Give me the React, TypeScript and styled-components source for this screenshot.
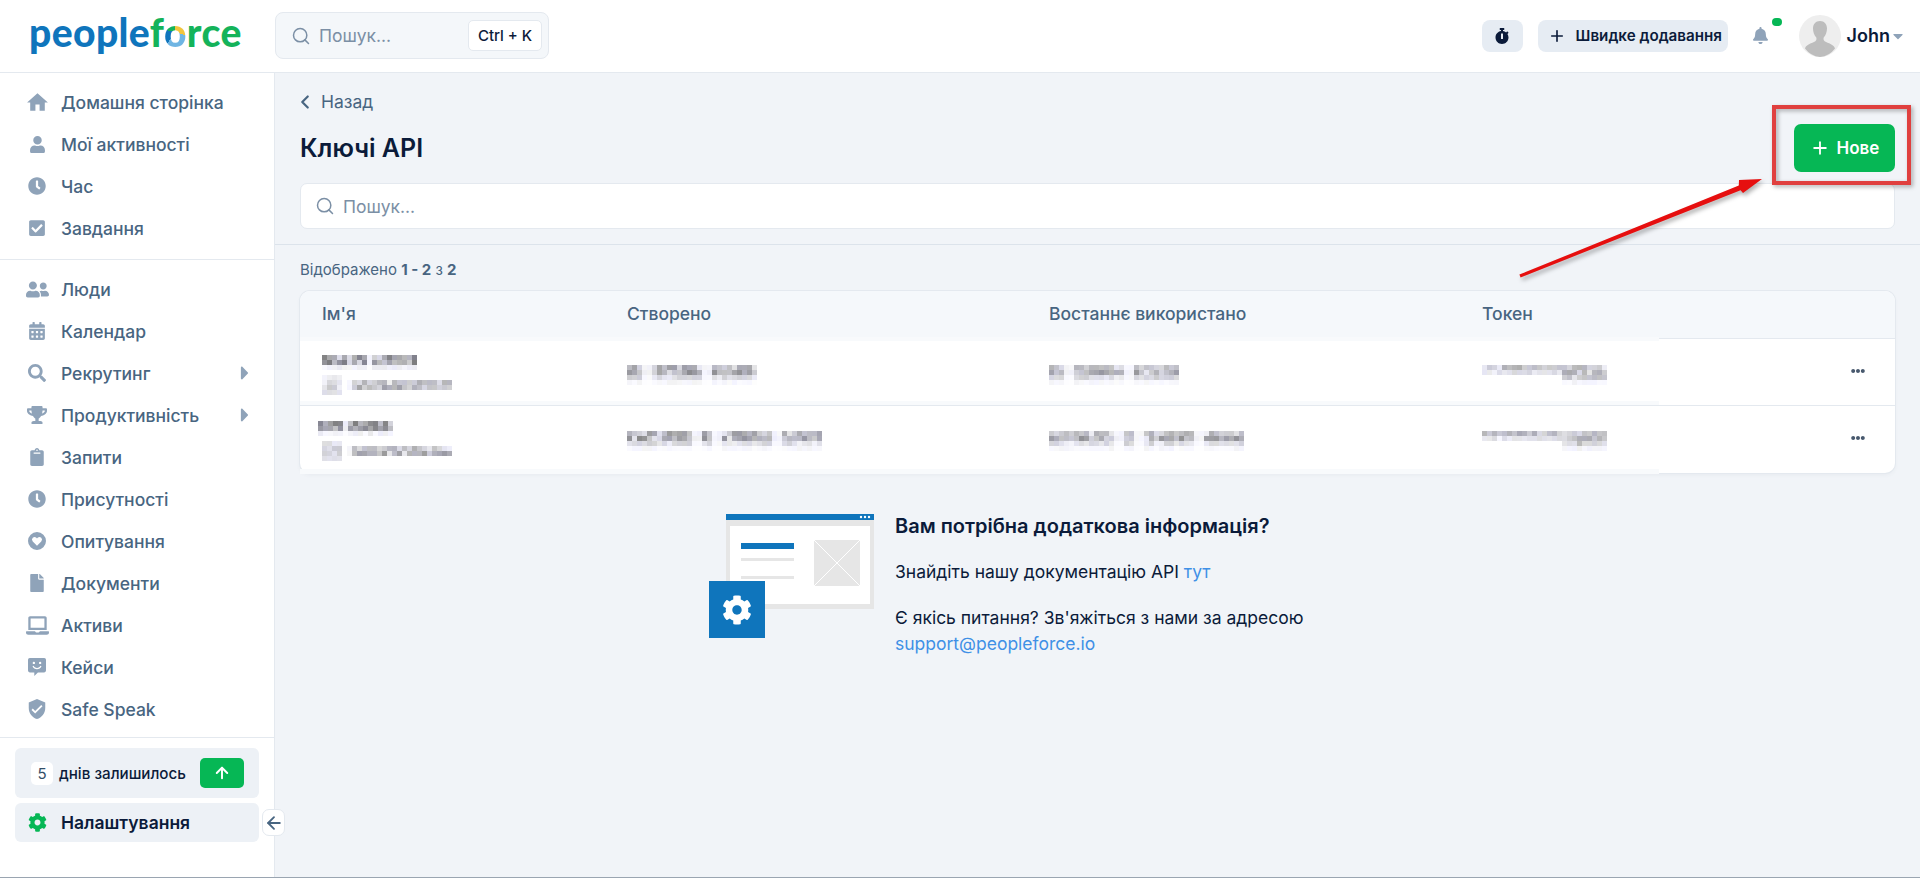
import styled, { createGlobalStyle } from "styled-components";
import { ArrowLeft, ArrowUp, ChevronLeft, Plus, Search } from "lucide-react";
import {
  FaBell,
  FaCalendarAlt,
  FaCaretDown,
  FaCaretRight,
  FaCheckSquare,
  FaClipboard,
  FaClock,
  FaCog,
  FaEllipsisH,
  FaFile,
  FaLaptop,
  FaSearch,
  FaStopwatch,
  FaTrophy,
  FaUser,
  FaUserFriends,
} from "react-icons/fa";
import { MdHome, MdVerifiedUser } from "react-icons/md";

const COLOR = {
  DARK: "#0b1b3a",
  NAV: "#486581",
  ICON: "#8fa3b9",
  LINE: "#e4e9ef",
  BG: "#f1f4f8",
  GREEN: "#06b755",
  BLUE: "#0f75bc",
  LINK: "#3f90e6",
  RED: "#e0403f",
};

const HeartCircle = ({ size }: { size: number }) => (
  <svg width={size} height={size} viewBox="0 0 20 20" fill={COLOR.ICON}>
    <path
      fillRule="evenodd"
      d="M10 0a10 10 0 1 0 0 20 10 10 0 0 0 0-20zm0 15.4L5.3 10.6a3 3 0 0 1 0-4.1 2.9 2.9 0 0 1 4 0l.7.7.7-.7a2.9 2.9 0 0 1 4 0 3 3 0 0 1 0 4.1z"
    />
  </svg>
);

const SmileChat = ({ size }: { size: number }) => (
  <svg width={size} height={size} viewBox="0 0 20 20" fill={COLOR.ICON}>
    <path
      fillRule="evenodd"
      d="M2 0h16a2 2 0 0 1 2 2v12a2 2 0 0 1-2 2h-7l-4 4v-4H2a2 2 0 0 1-2-2V2a2 2 0 0 1 2-2zm4.5 4.2a1.3 1.3 0 1 0 0 2.6 1.3 1.3 0 0 0 0-2.6zm7 0a1.3 1.3 0 1 0 0 2.6 1.3 1.3 0 0 0 0-2.6zM5 9.2c.8 2 2.8 3.3 5 3.3s4.2-1.3 5-3.3l-1.3-.5c-.6 1.5-2 2.4-3.7 2.4s-3.1-.9-3.7-2.4z"
    />
  </svg>
);

const topLinks = [
  { txt: "Домашня сторінка", Icon: MdHome, size: 25 },
  { txt: "Мої активності", Icon: FaUser, size: 17 },
  { txt: "Час", Icon: FaClock, size: 18 },
  { txt: "Завдання", Icon: FaCheckSquare, size: 18 },
];

const mainLinks = [
  { txt: "Люди", Icon: FaUserFriends, size: 23 },
  { txt: "Календар", Icon: FaCalendarAlt, size: 18 },
  { txt: "Рекрутинг", Icon: FaSearch, size: 18, sub: true },
  { txt: "Продуктивність", Icon: FaTrophy, size: 20, sub: true },
  { txt: "Запити", Icon: FaClipboard, size: 18 },
  { txt: "Присутності", Icon: FaClock, size: 18 },
  { txt: "Опитування", Icon: HeartCircle, size: 18 },
  { txt: "Документи", Icon: FaFile, size: 18 },
  { txt: "Активи", Icon: FaLaptop, size: 23 },
  { txt: "Кейси", Icon: SmileChat, size: 18 },
  { txt: "Safe Speak", Icon: MdVerifiedUser, size: 22 },
];

interface MosaicProps {
  cols: number;
  profile: number[];
  seed: number;
  gaps?: number[];
}

// the names and dates are pixelated in the picture, so they are mosaics here too
function Mosaic({ cols, profile, seed, gaps = [] }: MosaicProps) {
  const cell = 5;
  let s = seed;
  const next = () => {
    s = (s * 9301 + 49297) % 233280;
    return s / 233280;
  };
  const cells: { x: number; y: number; fill: string }[] = [];
  profile.forEach((strength, y) => {
    for (let x = 0; x < cols; x++) {
      const a = next();
      const light = gaps.includes(x) ? 0.15 : next() < 0.14 ? 0.45 : 1;
      const drop = strength * light * (62 + 85 * a);
      const v = Math.round(255 - drop);
      cells.push({ x, y, fill: `rgb(${v},${v},${Math.min(255, v + Math.round(next() * 14))})` });
    }
  });
  return (
    <MosaicSvg width={cols * cell} height={profile.length * cell}>
      {cells.map(({ x, y, fill }) => (
        <rect key={`${x}-${y}`} x={x * cell} y={y * cell} width={cell} height={cell} fill={fill} />
      ))}
    </MosaicSvg>
  );
}

const rows = [
  {
    top: 16,
    height: 66,
    nameCols: 19,
    nameGaps: [9],
    nameSeed: 17,
    nameIndent: 4,
    idSeed: 31,
    created: 26,
    createdGaps: [3, 4, 15, 16],
    used: 26,
    usedGaps: [3, 4, 15, 16],
    tokenSeed: 77,
    createdSeed: 5,
    usedSeed: 41,
  },
  {
    top: 15,
    height: 68,
    nameCols: 15,
    nameGaps: [5],
    nameSeed: 91,
    nameIndent: 0,
    idSeed: 63,
    created: 39,
    createdGaps: [13, 14, 17, 18, 29, 30],
    used: 39,
    usedGaps: [13, 14, 17, 18, 29, 30],
    tokenSeed: 12,
    createdSeed: 58,
    usedSeed: 104,
  },
];

export default function App() {
  return (
    <Page>
      <GlobalStyle />
      <Header>
        <LogoBox>
          <Logo>
            <LogoBlue>people</LogoBlue>
            <LogoGreen>f</LogoGreen>
            <LogoSwirl>o</LogoSwirl>
            <LogoGreen>rce</LogoGreen>
          </Logo>
        </LogoBox>
        <HeaderSearch>
          <Search size={20} strokeWidth={1.8} color="#7b8fa5" />
          <SearchTxt>Пошук...</SearchTxt>
          <Kbd>Ctrl + K</Kbd>
        </HeaderSearch>
        <HeaderRight>
          <TimerBtn>
            <FaStopwatch size={16} />
          </TimerBtn>
          <QuickAdd>
            <Plus size={18} strokeWidth={2.2} />
            Швидке додавання
          </QuickAdd>
          <BellBox>
            <FaBell size={17} color={COLOR.ICON} />
            <BellDot />
          </BellBox>
          <Avatar viewBox="0 0 42 42">
            <circle cx="21" cy="21" r="21" fill="#eeeeee" />
            <path
              d="M21 6c-4.500 0-7 3.200-7 7.500 0 3.500 1.300 7 3.300 9 .6 2-.2 3.700-2.300 4.500-4.500 1.700-8 3.300-9 6.500A21 21 0 0 0 21 42a21 21 0 0 0 15-8.500c-1-3.200-4.500-4.800-9-6.500-2.100-.8-2.900-2.500-2.300-4.500 2-2 3.300-5.500 3.300-9C28 9.200 25.500 6 21 6z"
              fill="#bdbdbd"
            />
          </Avatar>
          <UserName>John</UserName>
          <FaCaretDown size={16} color={COLOR.ICON} />
        </HeaderRight>
      </Header>
      <Body>
        <Sidebar>
          <NavGroup>
            {topLinks.map(({ txt, Icon, size }) => (
              <NavItem key={txt}>
                <NavIcon>
                  <Icon size={size} color={COLOR.ICON} />
                </NavIcon>
                {txt}
              </NavItem>
            ))}
          </NavGroup>
          <NavDivider />
          <NavGroup>
            {mainLinks.map(({ txt, Icon, size, sub }) => (
              <NavItem key={txt}>
                <NavIcon>
                  <Icon size={size} color={COLOR.ICON} />
                </NavIcon>
                {txt}
                {sub && (
                  <NavCaret>
                    <FaCaretRight size={22} color={COLOR.ICON} />
                  </NavCaret>
                )}
              </NavItem>
            ))}
          </NavGroup>
          <FooterDivider />
          <TrialBox>
            <TrialDays>5</TrialDays>
            <TrialTxt>днів залишилось</TrialTxt>
            <TrialBtn>
              <ArrowUp size={18} strokeWidth={2.6} color="#fff" />
            </TrialBtn>
          </TrialBox>
          <SettingsItem>
            <NavIcon>
              <FaCog size={19} color={COLOR.GREEN} />
            </NavIcon>
            Налаштування
            <CollapseBtn>
              <ArrowLeft size={20} strokeWidth={2.2} color={COLOR.NAV} />
            </CollapseBtn>
          </SettingsItem>
        </Sidebar>
        <Main>
          <TopBlock>
            <BackLink>
              <ChevronLeft size={22} strokeWidth={2.4} />
              Назад
            </BackLink>
            <TitleRow>
              <Title>Ключі API</Title>
              <NewBtn>
                <Plus size={20} strokeWidth={2.2} />
                Нове
              </NewBtn>
            </TitleRow>
            <SearchBar>
              <Search size={20} strokeWidth={1.8} color="#7b8fa5" />
              <SearchTxt>Пошук...</SearchTxt>
            </SearchBar>
          </TopBlock>
          <ListBlock>
            <CountTxt>
              Відображено <b>1 - 2</b> з <b>2</b>
            </CountTxt>
            <TableCard>
              <HeadRow>
                <HeadCell $first>Ім'я</HeadCell>
                <HeadCell>Створено</HeadCell>
                <HeadCell>Востаннє використано</HeadCell>
                <HeadCell>Токен</HeadCell>
              </HeadRow>
              {rows.map((row) => (
                <Row key={row.nameSeed} $top={row.top} $height={row.height}>
                  <NameCell>
                    <NameLine $indent={row.nameIndent}>
                      <Mosaic cols={row.nameCols} profile={[0.9, 0.9, 0.15]} seed={row.nameSeed} gaps={row.nameGaps} />
                    </NameLine>
                    <IdLine>
                      <Mosaic cols={4} profile={[0.25, 0.4, 0.4, 0.25]} seed={row.idSeed + 3} />
                      <Mosaic cols={21} profile={[0.55, 0.7]} seed={row.idSeed} gaps={[0]} />
                    </IdLine>
                  </NameCell>
                  <ValueCell>
                    <Mosaic
                      cols={row.created}
                      profile={[0.7, 0.8, 0.35, 0.08]}
                      seed={row.createdSeed}
                      gaps={row.createdGaps}
                    />
                  </ValueCell>
                  <ValueCell>
                    <Mosaic cols={row.used} profile={[0.55, 0.75, 0.35, 0.08]} seed={row.usedSeed} gaps={row.usedGaps} />
                  </ValueCell>
                  <ValueCell>
                    <Mosaic cols={16} profile={[0.6, 0.3]} seed={row.tokenSeed} />
                    <Mosaic cols={9} profile={[0.5, 0.6, 0.5, 0.1]} seed={row.tokenSeed + 9} />
                  </ValueCell>
                  <DotsCell>
                    <FaEllipsisH size={14} color="#48596e" />
                  </DotsCell>
                </Row>
              ))}
            </TableCard>
            <HelpBlock>
              <svg width="165" height="124" viewBox="0 0 165 124">
                <rect x="17" y="6" width="148" height="89" fill="#e6e6e6" />
                <rect x="17" y="0" width="148" height="6" fill={COLOR.BLUE} />
                <circle cx="152" cy="3" r="1.2" fill="#fff" />
                <circle cx="156" cy="3" r="1.2" fill="#fff" />
                <circle cx="160" cy="3" r="1.2" fill="#fff" />
                <rect x="21" y="12" width="140" height="78" fill="#fff" />
                <rect x="32" y="29" width="53" height="6" fill={COLOR.BLUE} />
                <rect x="32" y="44" width="53" height="3" fill="#e6e6e6" />
                <rect x="32" y="62" width="53" height="3" fill="#e6e6e6" />
                <rect x="105" y="26" width="46" height="46" fill="#e6e6e6" />
                <path d="M105 26l46 46M151 26l-46 46" stroke="#fff" strokeWidth="1" />
                <rect x="0" y="67" width="56" height="57" fill={COLOR.BLUE} />
                <g transform="translate(13 81)">
                  <FaCog size={30} color="#fff" />
                </g>
              </svg>
              <HelpTxt>
                <HelpTitle>Вам потрібна додаткова інформація?</HelpTitle>
                <HelpLine>
                  Знайдіть нашу документацію API <HelpLink>тут</HelpLink>
                </HelpLine>
                <HelpContact>
                  Є якісь питання? Зв'яжіться з нами за адресою
                  <br />
                  <HelpLink>support@peopleforce.io</HelpLink>
                </HelpContact>
              </HelpTxt>
            </HelpBlock>
          </ListBlock>
        </Main>
      </Body>
      <MarkBox />
      <MarkArrow width="280" height="130" viewBox="0 0 280 130">
        <path d="M19.4 114.600L238.800 25.600 239 20l23-1-19 14-2.400-2.800L20.600 117.400z" fill="#e60f0f" />
      </MarkArrow>
    </Page>
  );
}

const GlobalStyle = createGlobalStyle`
  * {
    box-sizing: border-box;
  }
  body {
    margin: 0;
    background: ${COLOR.BG};
    font-family: Inter, "Noto Sans", sans-serif;
    color: ${COLOR.DARK};
  }
`;

const Page = styled.div`
  position: relative;
  width: 1920px;
  height: 878px;
  overflow: hidden;
  border-bottom: 1px solid #9aa5b1;
`;

const Header = styled.header`
  display: flex;
  align-items: center;
  height: 73px;
  background: #fff;
  border-bottom: 1px solid ${COLOR.LINE};
`;

const LogoBox = styled.div`
  width: 275px;
  padding-left: 29px;
`;

const Logo = styled.div`
  font-family: Lato, sans-serif;
  font-size: 39px;
  font-weight: 900;
  line-height: 40px;
  letter-spacing: 0.4px;
  margin-top: -8px;
`;

const LogoBlue = styled.span`
  color: ${COLOR.BLUE};
`;

const LogoGreen = styled.span`
  color: #14b35a;
`;

const LogoSwirl = styled.span`
  background: conic-gradient(#f2c53d 0 30%, #6fb5e3 30% 60%, ${COLOR.BLUE} 60% 78%, #14b35a 78%);
  -webkit-background-clip: text;
  background-clip: text;
  color: transparent;
`;

const HeaderSearch = styled.div`
  display: flex;
  align-items: center;
  width: 274px;
  height: 47px;
  margin-top: -1px;
  padding: 0 6px 0 15px;
  background: #f4f7fa;
  border: 1px solid ${COLOR.LINE};
  border-radius: 8px;
`;

const SearchTxt = styled.span`
  margin-left: 8px;
  font-size: 17.5px;
  color: #7b8fa5;
`;

const Kbd = styled.span`
  margin-left: auto;
  width: 74px;
  height: 31px;
  display: flex;
  align-items: center;
  justify-content: center;
  background: #fff;
  border: 1px solid ${COLOR.LINE};
  border-radius: 5px;
  font-size: 15px;
  font-weight: 500;
  white-space: nowrap;
`;

const HeaderRight = styled.div`
  margin-left: auto;
  display: flex;
  align-items: center;
  margin-top: -1px;
  padding-right: 14px;
`;

const TimerBtn = styled.div`
  display: flex;
  align-items: center;
  justify-content: center;
  width: 41px;
  height: 32px;
  background: #e6ecf3;
  border-radius: 8px;
  color: ${COLOR.DARK};
`;

const QuickAdd = styled.div`
  display: flex;
  align-items: center;
  gap: 10px;
  width: 190px;
  height: 32px;
  margin-left: 15px;
  padding-left: 10px;
  background: #e6ecf3;
  border-radius: 8px;
  font-size: 15.2px;
  font-weight: 600;
  white-space: nowrap;
`;

const BellBox = styled.div`
  position: relative;
  display: flex;
  width: 17px;
  margin-left: 24px;
`;

const BellDot = styled.span`
  position: absolute;
  top: -9px;
  left: 20px;
  width: 10px;
  height: 8px;
  border-radius: 4px;
  background: ${COLOR.GREEN};
`;

const Avatar = styled.svg`
  width: 42px;
  height: 42px;
  margin-left: 30px;
`;

const UserName = styled.span`
  margin: 0 0 0 6px;
  font-size: 18px;
  font-weight: 600;
`;

const Body = styled.div`
  display: flex;
  height: 804px;
`;

const Sidebar = styled.aside`
  width: 275px;
  flex-shrink: 0;
  padding-top: 9px;
  background: #fff;
  border-right: 1px solid ${COLOR.LINE};
`;

const NavGroup = styled.nav`
  display: flex;
  flex-direction: column;
`;

const NavItem = styled.div`
  display: flex;
  align-items: center;
  height: 42px;
  padding: 0 0 2px 23px;
  font-size: 17.5px;
  font-weight: 500;
  color: ${COLOR.NAV};
`;

const NavIcon = styled.span`
  display: flex;
  align-items: center;
  justify-content: center;
  width: 28px;
  margin-right: 10px;
`;

const NavCaret = styled.span`
  display: flex;
  margin-left: auto;
  padding-right: 18px;
`;

const NavDivider = styled.div`
  margin: 9px 0;
  border-top: 1px solid ${COLOR.LINE};
`;

const FooterDivider = styled.div`
  margin: 6px 0 10px;
  border-top: 1px solid ${COLOR.LINE};
`;

const TrialBox = styled.div`
  display: flex;
  align-items: center;
  height: 50px;
  margin: 0 15px;
  padding: 0 15px 0 16px;
  background: #edf1f6;
  border-radius: 6px;
`;

const TrialDays = styled.span`
  display: flex;
  align-items: center;
  justify-content: center;
  width: 22px;
  height: 23px;
  background: #fff;
  border-radius: 5px;
  font-size: 15px;
  color: #334e68;
`;

const TrialTxt = styled.span`
  margin-left: 6px;
  font-size: 15.2px;
  font-weight: 500;
  white-space: nowrap;
`;

const TrialBtn = styled.span`
  display: flex;
  align-items: center;
  justify-content: center;
  margin-left: auto;
  width: 44px;
  height: 30px;
  background: ${COLOR.GREEN};
  border-radius: 5px;
`;

const SettingsItem = styled.div`
  position: relative;
  display: flex;
  align-items: center;
  height: 39px;
  margin: 5px 15px 0;
  padding-left: 8px;
  background: #edf1f6;
  border-radius: 6px;
  font-size: 17.5px;
  font-weight: 600;
`;

const CollapseBtn = styled.span`
  position: absolute;
  left: calc(100% + 3px);
  top: 6px;
  display: flex;
  align-items: center;
  justify-content: center;
  width: 23px;
  height: 27px;
  background: #fff;
  border: 1px solid ${COLOR.LINE};
  border-radius: 7px;
`;

const Main = styled.main`
  flex: 1;
`;

const TopBlock = styled.div`
  height: 172px;
  padding: 18px 25px 0 25px;
  border-bottom: 1px solid #dce3eb;
`;

const BackLink = styled.div`
  display: flex;
  align-items: center;
  gap: 5px;
  height: 24px;
  margin: 0 0 9px -6px;
  padding-bottom: 3px;
  font-size: 17.5px;
  color: ${COLOR.NAV};
`;

const TitleRow = styled.div`
  display: flex;
  align-items: center;
  justify-content: space-between;
  height: 48px;
  margin-bottom: 11px;
`;

const Title = styled.h1`
  margin: 0;
  font-size: 25px;
  font-weight: 600;
`;

const NewBtn = styled.button`
  display: flex;
  align-items: center;
  justify-content: center;
  gap: 7px;
  width: 101px;
  height: 48px;
  background: ${COLOR.GREEN};
  border: 0;
  border-radius: 7px;
  color: #fff;
  font-family: inherit;
  font-size: 17px;
  font-weight: 600;
`;

const SearchBar = styled.div`
  display: flex;
  align-items: center;
  height: 46px;
  padding-left: 14px;
  background: #fff;
  border: 1px solid ${COLOR.LINE};
  border-radius: 7px;
`;

const ListBlock = styled.div`
  padding: 15px 25px 0 25px;
`;

const CountTxt = styled.div`
  height: 20px;
  margin-bottom: 11px;
  font-size: 15px;
  line-height: 20px;
  color: ${COLOR.NAV};
  b {
    font-weight: 700;
  }
`;

const TableCard = styled.div`
  background: #fff;
  border-radius: 10px;
  box-shadow: 0 0 0 1px ${COLOR.LINE}, 0 2px 4px rgba(60, 80, 110, 0.06);
`;

const HeadRow = styled.div`
  position: relative;
  display: grid;
  grid-template-columns: 327px 422px 433px 1fr;
  align-items: center;
  height: 48px;
  padding-bottom: 2px;
  background: #f5f8fb;
  border-bottom: 1px solid ${COLOR.LINE};
  border-radius: 10px 10px 0 0;
  &::after {
    content: "";
    position: absolute;
    left: 0;
    bottom: -3px;
    width: 1359px;
    height: 4px;
    background: #f8fafc;
  }
`;

const HeadCell = styled.div<{ $first?: boolean }>`
  padding-left: ${({ $first }) => ($first ? "22px" : "0")};
  font-size: 17.5px;
  font-weight: 500;
  color: ${COLOR.NAV};
`;

const Row = styled.div<{ $top: number; $height: number }>`
  position: relative;
  display: grid;
  grid-template-columns: 327px 422px 433px 1fr;
  align-items: start;
  height: ${({ $height }) => $height}px;
  padding-top: ${({ $top }) => $top}px;
  & + & {
    border-top: 1px solid ${COLOR.LINE};
  }
  &::after {
    content: "";
    position: absolute;
    left: 0;
    bottom: -1px;
    width: 1359px;
    height: 5px;
    background: #f8fafc;
  }
`;

const NameCell = styled.div`
  padding-left: 18px;
`;

const NameLine = styled.div<{ $indent: number }>`
  display: flex;
  height: 20px;
  padding-left: ${({ $indent }) => $indent}px;
`;

const IdLine = styled.div`
  display: flex;
  align-items: center;
  gap: 5px;
  height: 20px;
  padding-left: 4px;
`;

const ValueCell = styled.div`
  display: flex;
  margin-top: 10px;
`;

const DotsCell = styled.div`
  position: absolute;
  right: 30px;
  top: 25px;
  display: flex;
`;

const MosaicSvg = styled.svg`
  display: block;
  flex-shrink: 0;
`;

const HelpBlock = styled.section`
  display: flex;
  gap: 21px;
  margin: 41px 0 0 409px;
`;

const HelpTxt = styled.div`
  font-size: 17.5px;
  line-height: 30px;
`;

const HelpTitle = styled.h3`
  margin: 0;
  font-size: 20px;
  font-weight: 600;
  line-height: 24px;
`;

const HelpLine = styled.p`
  margin: 19px 0 0;
`;

const HelpContact = styled.p`
  margin: 18px 0 0;
  line-height: 26px;
`;

const HelpLink = styled.span`
  color: ${COLOR.LINK};
`;

const MarkBox = styled.div`
  position: absolute;
  left: 1772px;
  top: 105px;
  width: 139px;
  height: 80px;
  border: 4px solid ${COLOR.RED};
  filter: drop-shadow(2px 2px 2px rgba(0, 0, 0, 0.3));
`;

const MarkArrow = styled.svg`
  position: absolute;
  left: 1500px;
  top: 160px;
  filter: drop-shadow(2px 3px 2px rgba(0, 0, 0, 0.3));
`;
